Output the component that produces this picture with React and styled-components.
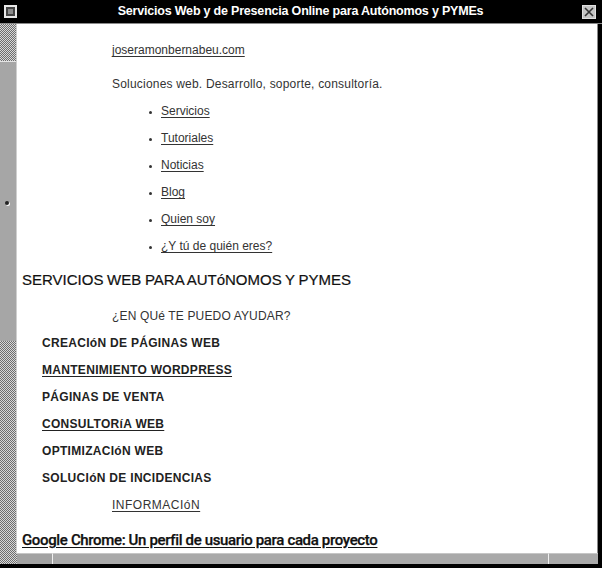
import React from "react";
import styled, { createGlobalStyle } from "styled-components";

const Global = createGlobalStyle`
  html, body { margin: 0; padding: 0; background: #000; }
  body { width: 602px; height: 568px; overflow: hidden; font-family: "Liberation Sans", Arial, sans-serif; }
  #root { width: 602px; height: 568px; }
`;

const checker = `repeating-conic-gradient(#6e6e6e 0 25%, #d8d8d8 0 50%) 0 0 / 2px 2px`;

const Window = styled.div`
  width: 602px;
  height: 568px;
  display: flex;
  flex-direction: column;
  background: #000;
  overflow: hidden;
`;

const TitleBar = styled.div`
  height: 24px;
  flex: 0 0 24px;
  display: flex;
  align-items: center;
  padding: 0 6px 1px 4px;
  box-sizing: border-box;
  background: #000;
  border-bottom: 1px solid #8a8a8a;
`;

const MenuIcon = styled.div`
  width: 13px;
  height: 13px;
  box-sizing: border-box;
  border: 2px solid #e8e8e8;
  display: flex;
  align-items: center;
  justify-content: center;
  background: #444;
  &::after {
    content: "";
    width: 5px;
    height: 5px;
    background: #8c8c8c;
  }
`;

const Title = styled.div`
  flex: 1;
  text-align: center;
  color: #fff;
  font-weight: bold;
  font-size: 12.5px;
  letter-spacing: -0.2px;
  padding-left: 2px;
`;

const CloseButton = styled.div`
  width: 14px;
  height: 14px;
  background: #c4c4c4;
  border: 1px solid #e0e0e0;
  box-sizing: border-box;
  display: flex;
  align-items: center;
  justify-content: center;
  margin-top: 1px;
`;

const Middle = styled.div`
  flex: 1 1 auto;
  display: flex;
  min-height: 0;
`;

const VScroll = styled.div`
  position: relative;
  width: 16px;
  flex: 0 0 16px;
  display: flex;
  flex-direction: column;
  border-right: 1px solid #cfcfcf;
`;

const Trough = styled.div`
  height: ${(p) => (p.$h ? `${p.$h}px` : "auto")};
  flex: ${(p) => (p.$h ? "0 0 auto" : "1")};
  background: ${checker};
`;

const Thumb = styled.div`
  height: 280px;
  flex: 0 0 280px;
  background: #a6a6a6;
  border-top: 1px solid #e4e4e4;
  box-sizing: border-box;
`;

const Pointer = styled.div`
  position: absolute;
  left: 5px;
  top: 177px;
  width: 4px;
  height: 4px;
  border-radius: 50%;
  background: #222;
  box-shadow: 1px 1px 0 #fff;
`;

const Content = styled.div`
  flex: 1;
  background: #fff;
  padding: 13px 0 0 5px;
  overflow: hidden;
  color: #333;
  font-size: 12px;
  border-right: 1px solid #8a8a8a;
  margin-right: 4px;
`;

const Row = styled.div`
  height: 27px;
  line-height: 27px;
  white-space: nowrap;
  padding-left: ${(p) => p.$indent || 0}px;
  margin-top: ${(p) => p.$mt || 0}px;
`;

const Link = styled.a`
  color: #333;
  text-decoration: underline;
  text-underline-offset: 2px;
`;

const Tagline = styled.span`
  color: #333;
  letter-spacing: 0.2px;
`;

const NavList = styled.ul`
  list-style: none;
  margin: 0;
  padding: 0 0 0 139px;
`;

const NavItem = styled.li`
  height: 27px;
  line-height: 27px;
  position: relative;
  &::before {
    content: "";
    position: absolute;
    left: -12px;
    top: 13px;
    width: 3px;
    height: 3px;
    border-radius: 50%;
    background: #333;
  }
`;

const Heading = styled.h2`
  margin: 6px 0 0 0;
  height: 27px;
  line-height: 27px;
  font-size: 15px;
  font-weight: normal;
  color: #111;
  letter-spacing: 0;
  word-spacing: -0.5px;
  white-space: nowrap;
  -webkit-text-stroke: 0.2px #111;
`;

const SubHeading = styled.div`
  margin-top: 10px;
  height: 27px;
  line-height: 27px;
  padding-left: 90px;
  font-size: 12px;
  color: #333;
  letter-spacing: 0.15px;
`;

const Service = styled.div`
  height: 27px;
  line-height: 27px;
  padding-left: 20px;
  font-size: 12px;
  font-weight: bold;
  color: #222;
  letter-spacing: 0.3px;
  white-space: nowrap;
  text-decoration: ${(p) => (p.$link ? "underline" : "none")};
  text-underline-offset: 2px;
`;

const Info = styled.div`
  height: 27px;
  line-height: 27px;
  padding-left: 90px;
  font-size: 12px;
  letter-spacing: 0.5px;
`;

const PostTitle = styled.div`
  margin-top: 8px;
  height: 27px;
  line-height: 27px;
  font-family: "Roboto", "Liberation Sans", sans-serif;
  font-weight: 500;
  font-size: 15px;
  letter-spacing: -0.35px;
  color: #111;
  text-decoration: underline;
  text-underline-offset: 2px;
  white-space: nowrap;
  -webkit-text-stroke: 0.25px #111;
`;

const HScroll = styled.div`
  height: 11px;
  flex: 0 0 11px;
  display: flex;
  background: #000;
`;

const HSeg = styled.div`
  width: ${(p) => p.$w}px;
  flex: 0 0 ${(p) => p.$w}px;
  background: ${(p) => (p.$checker ? checker : p.$bg || "#a9a9a9")};
  border-left: ${(p) => (p.$divider ? "1px solid #f0f0f0" : "none")};
  border-top: ${(p) => (p.$checker ? "none" : "1px solid #c6c6c6")};
  box-sizing: border-box;
`;

const BottomEdge = styled.div`
  height: 4px;
  flex: 0 0 4px;
  background: #000;
`;

const nav = ["Servicios", "Tutoriales", "Noticias", "Blog", "Quien soy", "¿Y tú de quién eres?"];
const services = [
  ["CREACIóN DE PÁGINAS WEB", false],
  ["MANTENIMIENTO WORDPRESS", true],
  ["PÁGINAS DE VENTA", false],
  ["CONSULTORíA WEB", true],
  ["OPTIMIZACIóN WEB", false],
  ["SOLUCIóN DE INCIDENCIAS", false],
];

export default function App() {
  return (
    <>
      <Global />
      <Window>
        <TitleBar>
          <MenuIcon />
          <Title>Servicios Web y de Presencia Online para Autónomos y PYMEs</Title>
          <CloseButton>
            <svg width="10" height="10" viewBox="0 0 10 10">
              <path d="M1 1L9 9M9 1L1 9" stroke="#333" strokeWidth="1.6" />
            </svg>
          </CloseButton>
        </TitleBar>
        <Middle>
          <VScroll>
            <Trough $h={37} />
            <Thumb />
            <Trough />
            <Pointer />
          </VScroll>
          <Content>
            <Row $indent={90}>
              <Link>joseramonbernabeu.com</Link>
            </Row>
            <Row $indent={90} $mt={7}>
              <Tagline>Soluciones web. Desarrollo, soporte, consultoría.</Tagline>
            </Row>
            <NavList>
              {nav.map((n) => (
                <NavItem key={n}>
                  <Link>{n}</Link>
                </NavItem>
              ))}
            </NavList>
            <Heading>SERVICIOS WEB PARA AUTóNOMOS Y PYMES</Heading>
            <SubHeading>¿EN QUé TE PUEDO AYUDAR?</SubHeading>
            {services.map(([s, l]) => (
              <Service key={s} $link={l}>{s}</Service>
            ))}
            <Info>
              <Link>INFORMACIóN</Link>
            </Info>
            <PostTitle>Google Chrome: Un perfil de usuario para cada proyecto</PostTitle>
          </Content>
        </Middle>
        <HScroll>
          <HSeg $w={17} $checker />
          <HSeg $w={35} $bg="#a2a2a2" />
          <HSeg $w={496} $divider />
          <HSeg $w={50} $divider />
        </HScroll>
        <BottomEdge />
      </Window>
    </>
  );
}
